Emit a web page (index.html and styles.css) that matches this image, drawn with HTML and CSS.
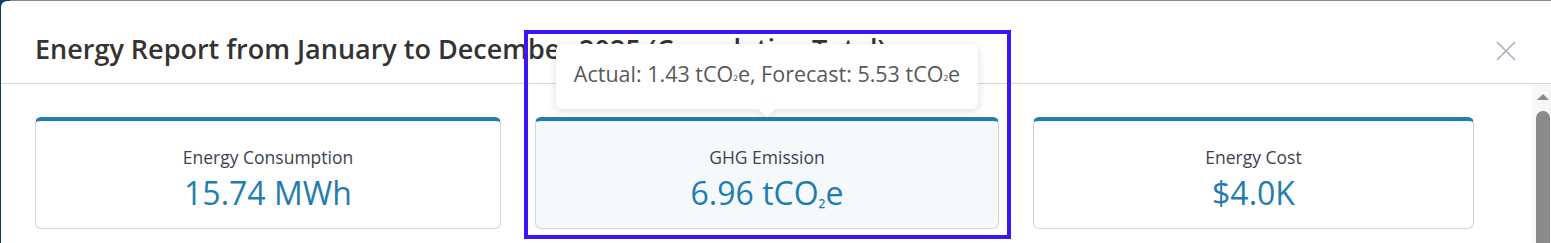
FILE: index.html
```html
<!DOCTYPE html>
<html lang="en">
<head>
<meta charset="utf-8">
<title>Energy Report</title>
<link rel="stylesheet" href="styles.css">
</head>
<body>
<div class="backdrop">
  <div class="modal">
    <header class="modal-header">
      <h2 class="modal-title">Energy Report from January to December 2025 (Cumulative Total)</h2>
      <button class="close-btn" aria-label="Close">
        <svg width="20" height="20" viewBox="0 0 20 20"><path d="M1 1 L19 19 M19 1 L1 19" stroke="#a3b1c2" stroke-width="1.6" fill="none"/></svg>
      </button>
    </header>
    <div class="modal-body">
      <div class="body-content">
        <div class="cards">
          <div class="card">
            <div class="card-label">Energy Consumption</div>
            <div class="card-value">15.74 MWh</div>
          </div>
          <div class="card card-hover">
            <div class="tooltip">Actual: 1.43 tCO<span class="sub">₂</span>e, Forecast: 5.53 tCO<span class="sub">₂</span>e</div>
            <div class="card-label">GHG Emission</div>
            <div class="card-value">6.96 tCO<span class="sub">₂</span>e</div>
          </div>
          <div class="card">
            <div class="card-label">Energy Cost</div>
            <div class="card-value">$4.0K</div>
          </div>
        </div>
      </div>
      <div class="scrollbar">
        <div class="scroll-arrow"></div>
        <div class="scroll-thumb"></div>
      </div>
    </div>
  </div>
  <div class="highlight"></div>
</div>
</body>
</html>
```

FILE: styles.css
```css
* { box-sizing: border-box; }
html, body { margin: 0; padding: 0; height: 100%; overflow: hidden; }
body { font-family: "Open Sans", "Noto Sans", sans-serif; }

.backdrop {
  position: relative;
  height: 243px;
  padding: 1px 0 0 1px;
  background: linear-gradient(#8c8c8c, #8c8c8c) 10px 0 / 100% 1px no-repeat, #0d3a5e;
}

.modal {
  height: 242px;
  background: #fff;
  border-top-left-radius: 6px;
  display: flex;
  flex-direction: column;
}

.modal-header {
  height: 83px;
  flex: none;
  border-bottom: 1px solid #d3dae1;
  display: flex;
  align-items: center;
  justify-content: space-between;
  padding: 14px 34px 0 34px;
}

.modal-title {
  margin: 0;
  font-size: 27px;
  line-height: 36px;
  font-weight: 600;
  color: #333;
  white-space: nowrap;
}

.close-btn {
  border: 0;
  background: none;
  padding: 0;
  width: 20px;
  height: 20px;
  display: flex;
  margin-top: 4px;
  margin-right: 1px;
}

.modal-body {
  flex: 1;
  display: flex;
  min-height: 0;
}

.body-content {
  flex: 1;
  padding: 33px 0 0 34px;
}

.cards {
  display: grid;
  grid-template-columns: 466px 464px 441px;
  column-gap: 34px;
}

.card {
  position: relative;
  height: 112px;
  border: 1px solid #ccd6e1;
  border-top: 4px solid #1f7db0;
  border-radius: 6px;
  background: #fff;
  display: flex;
  flex-direction: column;
  align-items: center;
  justify-content: center;
  padding-top: 10px;
}

.card-hover { background: #f5f9fc; }

.card-label {
  font-size: 17.5px;
  line-height: 22px;
  color: #3b4350;
}

.card-value {
  font-size: 32px;
  line-height: 40px;
  color: #1f7db0;
  margin-top: 5px;
}

.sub { font-size: 0.62em; line-height: 0; }

.tooltip {
  position: absolute;
  left: 50%;
  bottom: calc(100% + 12px);
  transform: translateX(-50%);
  width: 422px;
  height: 65px;
  background: #fff;
  border-radius: 6px;
  box-shadow: 0 2px 10px rgba(0, 0, 0, 0.14);
  font-size: 21.5px;
  color: #595959;
  display: flex;
  align-items: center;
  justify-content: center;
  padding-bottom: 6px;
  white-space: nowrap;
}

.tooltip::after {
  content: "";
  position: absolute;
  left: 50%;
  bottom: -6px;
  width: 12px;
  height: 12px;
  background: #fff;
  transform: translateX(-50%) rotate(45deg);
  box-shadow: 3px 3px 5px rgba(0, 0, 0, 0.06);
}

.scrollbar {
  width: 19px;
  flex: none;
  background: #f7f7f7;
  display: flex;
  flex-direction: column;
  align-items: flex-end;
  padding: 10px 1px 0 0;
}

.scroll-arrow {
  width: 0;
  height: 0;
  border-left: 6px solid transparent;
  border-right: 6px solid transparent;
  border-bottom: 6px solid #8a8a8a;
  margin-right: 1px;
}

.scroll-thumb {
  width: 14px;
  flex: 1;
  margin-top: 11px;
  background: #8a8a8a;
  border-radius: 7px 7px 0 0;
}

.highlight {
  position: absolute;
  left: 524px;
  top: 30px;
  width: 487px;
  height: 209px;
  border: 4px solid #3a16f5;
  pointer-events: none;
}
```
